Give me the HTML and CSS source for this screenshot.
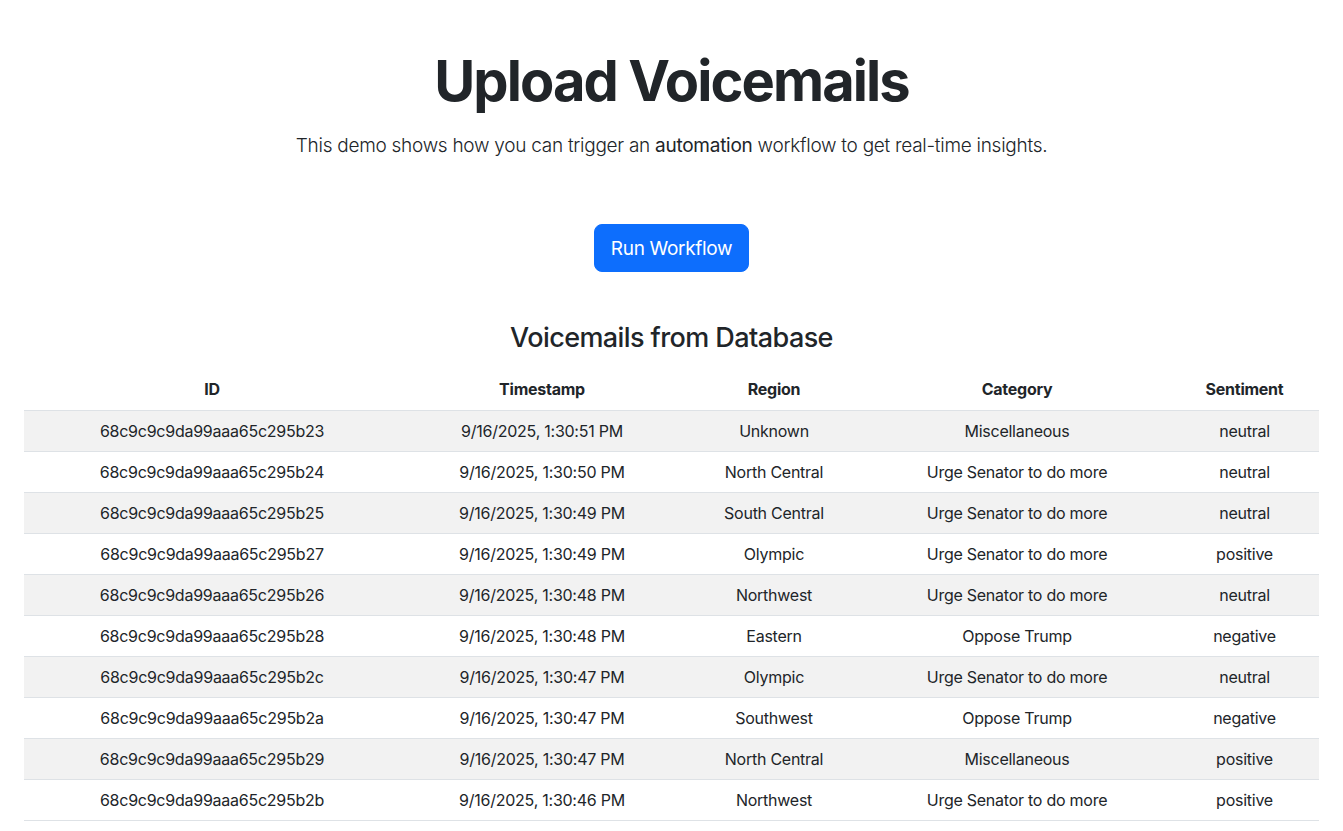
FILE: index.html
```html
<!DOCTYPE html>
<html lang="en">
<head>
<meta charset="utf-8">
<title>Upload Voicemails</title>
<link rel="stylesheet" href="styles.css">
</head>
<body>
<main class="page">
  <header class="hero">
    <h1 class="title">Upload Voicemails</h1>
    <p class="lead">This demo shows how you can trigger an <strong>automation</strong> workflow to get real-time insights.</p>
    <button class="btn-run" type="button">Run Workflow</button>
  </header>
  <section class="data">
    <h3 class="data-title">Voicemails from Database</h3>
    <table class="vm-table">
      <colgroup>
        <col class="c-id"><col class="c-ts"><col class="c-region"><col class="c-cat"><col class="c-sent">
      </colgroup>
      <thead>
        <tr><th>ID</th><th>Timestamp</th><th>Region</th><th>Category</th><th>Sentiment</th></tr>
      </thead>
      <tbody>
        <tr><td>68c9c9c9da99aaa65c295b23</td><td>9/16/2025, 1:30:51 PM</td><td>Unknown</td><td>Miscellaneous</td><td>neutral</td></tr>
        <tr><td>68c9c9c9da99aaa65c295b24</td><td>9/16/2025, 1:30:50 PM</td><td>North Central</td><td>Urge Senator to do more</td><td>neutral</td></tr>
        <tr><td>68c9c9c9da99aaa65c295b25</td><td>9/16/2025, 1:30:49 PM</td><td>South Central</td><td>Urge Senator to do more</td><td>neutral</td></tr>
        <tr><td>68c9c9c9da99aaa65c295b27</td><td>9/16/2025, 1:30:49 PM</td><td>Olympic</td><td>Urge Senator to do more</td><td>positive</td></tr>
        <tr><td>68c9c9c9da99aaa65c295b26</td><td>9/16/2025, 1:30:48 PM</td><td>Northwest</td><td>Urge Senator to do more</td><td>neutral</td></tr>
        <tr><td>68c9c9c9da99aaa65c295b28</td><td>9/16/2025, 1:30:48 PM</td><td>Eastern</td><td>Oppose Trump</td><td>negative</td></tr>
        <tr><td>68c9c9c9da99aaa65c295b2c</td><td>9/16/2025, 1:30:47 PM</td><td>Olympic</td><td>Urge Senator to do more</td><td>neutral</td></tr>
        <tr><td>68c9c9c9da99aaa65c295b2a</td><td>9/16/2025, 1:30:47 PM</td><td>Southwest</td><td>Oppose Trump</td><td>negative</td></tr>
        <tr><td>68c9c9c9da99aaa65c295b29</td><td>9/16/2025, 1:30:47 PM</td><td>North Central</td><td>Miscellaneous</td><td>positive</td></tr>
        <tr><td>68c9c9c9da99aaa65c295b2b</td><td>9/16/2025, 1:30:46 PM</td><td>Northwest</td><td>Urge Senator to do more</td><td>positive</td></tr>
      </tbody>
    </table>
  </section>
</main>
</body>
</html>
```

FILE: styles.css
```css
* { box-sizing: border-box; }
html, body { margin: 0; padding: 0; background: #fff; }
body {
  font-family: Inter, "Noto Sans", "Liberation Sans", sans-serif;
  color: #212529;
  font-size: 16px;
  line-height: 1.5;
}
.page {
  padding: 48px 24px 0;
}
.hero {
  display: flex;
  flex-direction: column;
  align-items: center;
  text-align: center;
}
.title {
  margin: 0 0 16px;
  font-size: 56px;
  line-height: 1.2;
  font-weight: 700;
  letter-spacing: -1.9px;
}
.lead {
  margin: 0;
  font-size: 19px;
  line-height: 30px;
  font-weight: 300;
  letter-spacing: -0.27px;
}
.lead strong { font-weight: 400; }
.btn-run {
  margin-top: 63px;
  height: 48px;
  padding: 0 16px;
  font-family: inherit;
  font-size: 19px;
  font-weight: 400;
  letter-spacing: -0.33px;
  color: #fff;
  background: #0d6efd;
  border: 1px solid #0d6efd;
  border-radius: 8px;
}
.data {
  margin-top: 49px;
}
.data-title {
  margin: 0 0 14px;
  text-align: center;
  font-size: 27px;
  line-height: 34px;
  font-weight: 500;
  letter-spacing: -0.58px;
}
.vm-table {
  width: 100%;
  border-collapse: collapse;
  table-layout: fixed;
  font-size: 16px;
  letter-spacing: -0.25px;
}
.c-id { width: 376px; }
.c-ts { width: 284px; }
.c-region { width: 180px; }
.c-cat { width: 306px; }
.c-sent { width: auto; }
.vm-table th, .vm-table td {
  height: 41px;
  padding: 8px;
  text-align: center;
  border-bottom: 1px solid #dee2e6;
  line-height: 24px;
}
.vm-table th { font-weight: 700; }
.vm-table tbody tr:nth-child(odd) td { background: #f2f2f2; }
```
